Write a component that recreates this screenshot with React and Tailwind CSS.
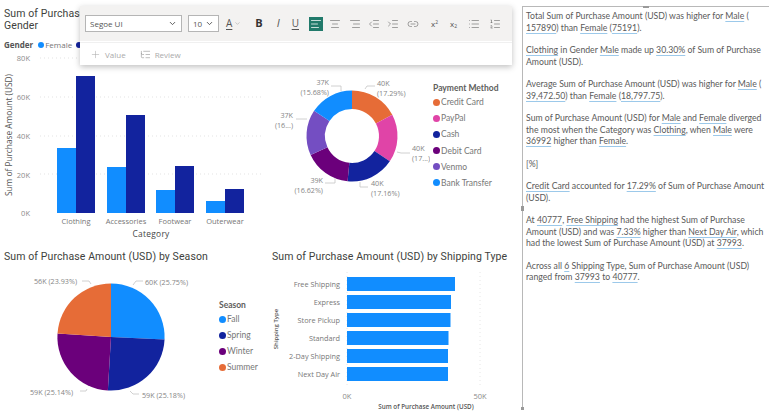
import { AlignCenter, AlignLeft, AlignRight, ChevronDown, IndentDecrease, IndentIncrease, Link2, List, ListOrdered, ListTree, Plus } from 'lucide-react';

const BLUE = '#118DFF';
const NAVY = '#12239E';
const ORANGE = '#E66C37';
const PINK = '#E044A7';
const PURPLE = '#6B007B';
const VIOLET = '#744EC2';

const slicePath = (cx, cy, r, inner, from, to) => {
  const pt = (rad, pct) => {
    const a = (pct / 100) * Math.PI * 2 - Math.PI / 2;
    return `${cx + rad * Math.cos(a)} ${cy + rad * Math.sin(a)}`;
  };
  const large = to - from > 50 ? 1 : 0;
  if (!inner) return `M${cx} ${cy}L${pt(r, from)}A${r} ${r} 0 ${large} 1 ${pt(r, to)}Z`;
  return `M${pt(r, from)}A${r} ${r} 0 ${large} 1 ${pt(r, to)}L${pt(inner, to)}A${inner} ${inner} 0 ${large} 0 ${pt(inner, from)}Z`;
};

const Slices = ({ cx, cy, r, inner = 0, data }) => {
  let at = 0;
  return data.map(([pct, color]) => {
    const d = slicePath(cx, cy, r, inner, at, at + pct);
    at += pct;
    return <path key={color} d={d} fill={color} />;
  });
};

const Legend = ({ title, items, gap }) => (
  <div className="text-[8.5px] leading-[12px] text-[#777] font-['Lato',sans-serif]">
    <p className="font-bold text-[#605e5c] whitespace-nowrap">{title}</p>
    <div className={`flex flex-col ${gap} mt-[2px]`}>
      {items.map(([name, color]) => (
        <div key={name} className="flex items-center gap-[1px] whitespace-nowrap">
          <span className="w-[7px] h-[7px] rounded-full" style={{ background: color }} />
          <span>{name}</span>
        </div>
      ))}
    </div>
  </div>
);

const Title = ({ children }) => (
  <h2 className="text-[10.5px] leading-[12px] tracking-[0.1px] text-[#403f3d] font-normal whitespace-nowrap">{children}</h2>
);

const CategoryChart = () => {
  const groups = [
    ['Clothing', 57, 149, 77],
    ['Accessories', 107, 168, 116],
    ['Footwear', 156, 191, 167],
    ['Outerwear', 206, 202, 190],
  ];
  return (
    <svg width="262" height="193" viewBox="0 52 262 193" className="block shrink-0" fontFamily="'Open Sans', sans-serif">
      {[59, 98, 137, 175].map((y) => (
        <line key={y} x1="40" x2="262" y1={y} y2={y} stroke="#e3e3e3" strokeDasharray="1 3" />
      ))}
      {[['80K', 62], ['60K', 101], ['40K', 140], ['20K', 179], ['0K', 217]].map(([t, y]) => (
        <text key={t} x="30" y={y} textAnchor="end" fontSize="7.5" fill="#8a8a8a">{t}</text>
      ))}
      {groups.map(([name, x, f, m]) => (
        <g key={name}>
          <rect x={x} y={f} width="19" height={214 - f} fill={BLUE} />
          <rect x={x + 19} y={m} width="19" height={214 - m} fill={NAVY} />
          <text x={x + 19} y="225" textAnchor="middle" fontSize="7.5" fill="#777">{name}</text>
        </g>
      ))}
      <text x="151" y="238" textAnchor="middle" fontSize="8.4" letterSpacing="0.3" fill="#444">Category</text>
      <text transform="translate(12 136) rotate(-90)" textAnchor="middle" fontSize="8.3" fill="#555">Sum of Purchase Amount (USD)</text>
    </svg>
  );
};

const DonutChart = () => {
  const labels = [
    [377, 85.5, '40K', '(17.29%)', 'start'],
    [412, 150.5, '40K', '(17...)', 'start'],
    [371, 185.5, '40K', '(17.16%)', 'start'],
    [323, 182.5, '39K', '(16.62%)', 'end'],
    [293, 117.5, '37K', '(16...)', 'end'],
    [329, 84.5, '37K', '(15.68%)', 'end'],
  ];
  const leaders = ['M365 89L367 86H375', 'M397 152L401 153H410', 'M360 182V187H368', 'M335 178V183H325', 'M296 119H307', 'M341 91V86H331'];
  return (
    <svg width="168" height="140" viewBox="262 70 168 140" className="block shrink-0" fontFamily="'Open Sans', sans-serif">
      <Slices cx={352} cy={136} r={45.5} inner={27} data={[[17.29, ORANGE], [17.1, PINK], [17.16, NAVY], [16.62, PURPLE], [16.15, VIOLET], [15.68, BLUE]]} />
      {leaders.map((d) => <path key={d} d={d} fill="none" stroke="#c4c4c4" strokeWidth="0.8" />)}
      {labels.map(([x, y, a, b, anchor]) => (
        <g key={b + x} fontSize="7.2" fill="#858585" textAnchor={anchor}>
          <text x={x} y={y}>{a}</text>
          <text x={x} y={y + 10}>{b}</text>
        </g>
      ))}
    </svg>
  );
};

const SeasonChart = () => (
  <svg width="215" height="130" viewBox="0 272 215 130" className="block shrink-0" fontFamily="'Open Sans', sans-serif">
    <Slices cx={111} cy={337} r={53.6} data={[[25.75, BLUE], [25.18, NAVY], [25.14, PURPLE], [23.93, ORANGE]]} />
    {['M133 285L136 281H143', 'M130 391L133 394H139', 'M80 391H86L87 389', 'M82 281H89L91 284'].map((d) => (
      <path key={d} d={d} fill="none" stroke="#c4c4c4" strokeWidth="0.8" />
    ))}
    <g fontSize="7.2" fill="#858585">
      <text x="145" y="284.5">60K (25.75%)</text>
      <text x="142" y="397.5">59K (25.18%)</text>
      <text x="30" y="394.5">59K (25.14%)</text>
      <text x="34" y="283.5">56K (23.93%)</text>
    </g>
  </svg>
);

const ShippingChart = () => {
  const rows = [
    ['Free Shipping', 277, 108],
    ['Express', 295, 104],
    ['Store Pickup', 313, 103.5],
    ['Standard', 331, 101.5],
    ['2-Day Shipping', 349, 101],
    ['Next Day Air', 367, 101],
  ];
  return (
    <svg width="250" height="143" viewBox="270 272 250 143" className="block shrink-0" fontFamily="'Open Sans', sans-serif">
      {[347, 480].map((x) => (
        <line key={x} x1={x} x2={x} y1="272" y2="385" stroke="#e6e6e6" strokeDasharray="1 3" />
      ))}
      {rows.map(([name, y, w]) => (
        <g key={name}>
          <rect x="347" y={y} width={w} height="14" fill={BLUE} />
          <text x="340" y={y + 10} textAnchor="end" fontSize="7.3" fill="#777">{name}</text>
        </g>
      ))}
      <text x="347" y="399" textAnchor="middle" fontSize="7.5" fill="#8a8a8a">0K</text>
      <text x="480" y="399" textAnchor="middle" fontSize="7.5" fill="#8a8a8a">50K</text>
      <text x="426" y="409" textAnchor="middle" fontSize="6.3" fontWeight="600" fill="#555">Sum of Purchase Amount (USD)</text>
      <text transform="translate(278 329) rotate(-90)" textAnchor="middle" fontSize="6" fontWeight="600" fill="#555">Shipping Type</text>
    </svg>
  );
};

const Hl = ({ children }) => (
  <span className="underline decoration-[#9cc9ea] underline-offset-2">{children}</span>
);

const ToolIcon = ({ icon: Icon, className }) => (
  <span className={`w-[14px] h-[14px] flex items-center justify-center ${className}`}>
    <Icon className="w-[12px] h-[12px] stroke-[1.2] text-[#666]" />
  </span>
);

const Toolbar = () => (
  <div className="absolute left-[80px] top-[6px] w-[432px] h-[59px] bg-white shadow-[0_2px_6px_rgba(0,0,0,0.25)] font-['Open_Sans',sans-serif]">
    <div className="h-[35px] bg-[#f3f2f1] flex items-center pl-[5px] text-[#555]">
      <div className="w-[97px] h-[17px] bg-white border border-[#b5b5b5] flex items-center justify-between px-[4px] text-[8px]">
        <span>Segoe UI</span>
        <ChevronDown className="w-[9px] h-[9px] stroke-[2.5]" />
      </div>
      <div className="ml-[6px] w-[31px] h-[17px] bg-white border border-[#b5b5b5] flex items-center justify-between px-[4px] text-[8px]">
        <span>10</span>
        <ChevronDown className="w-[9px] h-[9px] stroke-[2.5]" />
      </div>
      <span className="ml-[7px] text-[10px] underline underline-offset-2">A</span>
      <ChevronDown className="ml-[2px] w-[7px] h-[7px] text-[#aaa]" />
      <span className="ml-[14px] text-[11px] font-bold text-[#333]">B</span>
      <span className="ml-[14px] text-[11px] italic">I</span>
      <span className="ml-[12px] text-[10px] underline underline-offset-2">U</span>
      <span className="ml-[10px] w-[14px] h-[14px] bg-[#217a6b] flex items-center justify-center">
        <AlignLeft className="w-[12px] h-[12px] text-white stroke-[1.5]" />
      </span>
      <ToolIcon icon={AlignCenter} className="ml-[5px]" />
      <ToolIcon icon={AlignRight} className="ml-[6px]" />
      <ToolIcon icon={IndentDecrease} className="ml-[5px]" />
      <ToolIcon icon={IndentIncrease} className="ml-[5px]" />
      <ToolIcon icon={Link2} className="ml-[6px]" />
      <span className="ml-[11px] text-[8px]">x<sup className="text-[5px]">2</sup></span>
      <span className="ml-[12px] text-[8px]">x<sub className="text-[5px]">2</sub></span>
      <ToolIcon icon={List} className="ml-[10px]" />
      <ToolIcon icon={ListOrdered} className="ml-[7px]" />
    </div>
    <div className="h-[24px] border-t border-[#f0f0f0] mt-[1px] flex items-center pl-[10px] text-[8px] text-[#aaa]">
      <Plus className="w-[11px] h-[11px] stroke-[1.2]" />
      <span className="ml-[4px]">Value</span>
      <ListTree className="ml-[14px] w-[11px] h-[11px] stroke-[1.2] text-[#888]" />
      <span className="ml-[4px]">Review</span>
    </div>
  </div>
);

const App = () => {
  return (
    <div className="relative w-[769px] h-[418px] bg-white overflow-hidden flex font-['Roboto',sans-serif]">
      <div className="w-[522px] h-full grid grid-cols-[262px_260px] grid-rows-[245px_173px]">
        {/* Category / gender */}
        <div>
          <div className="pt-[8px] px-1">
            <Title>Sum of Purchase Amount (USD) by Category and<br />Gender</Title>
            <div className="mt-[7px] h-[12px] flex items-center text-[8px] text-[#777] font-['Open_Sans',sans-serif] whitespace-nowrap">
              <span className="font-bold text-[#555] mr-[5px]">Gender</span>
              <span className="w-[6px] h-[6px] rounded-full bg-[#118DFF] mr-[1px]" />
              <span className="mr-[4px]">Female</span>
              <span className="w-[6px] h-[6px] rounded-full bg-[#12239E] mr-[1px]" />
              <span>Male</span>
            </div>
          </div>
          <CategoryChart />
        </div>

        {/* Payment method */}
        <div className="pt-[70px] flex">
          <DonutChart />
          <div className="ml-[3px] pt-[12px]">
            <Legend
              title="Payment Method"
              gap="gap-[4.2px]"
              items={[['Credit Card', ORANGE], ['PayPal', PINK], ['Cash', NAVY], ['Debit Card', PURPLE], ['Venmo', VIOLET], ['Bank Transfer', BLUE]]}
            />
          </div>
        </div>

        {/* Season */}
        <div>
          <div className="pt-[6px] px-1 h-[27px]">
            <Title>Sum of Purchase Amount (USD) by Season</Title>
          </div>
          <div className="flex">
            <SeasonChart />
            <div className="ml-[4px] pt-[27px]">
              <Legend title="Season" gap="gap-[4px]" items={[['Fall', BLUE], ['Spring', NAVY], ['Winter', PURPLE], ['Summer', ORANGE]]} />
            </div>
          </div>
        </div>

        {/* Shipping */}
        <div className="pl-[8px]">
          <div className="pt-[6px] pl-[2px] h-[27px]">
            <Title>Sum of Purchase Amount (USD) by Shipping Type</Title>
          </div>
          <ShippingChart />
        </div>
      </div>

      {/* Smart narrative */}
      <div className="relative mt-[6px] h-[404px] flex-1 border-l border-t border-[#b8b8b8] pl-[3px] pt-[3px] font-['Lato',sans-serif] text-[8.7px] leading-[11.5px] text-[#5a5a5a] flex flex-col gap-[11px] whitespace-nowrap">
        <p>Total Sum of Purchase Amount (USD) was higher for <Hl>Male</Hl> (<br /><Hl>157890</Hl>) than <Hl>Female</Hl> (<Hl>75191</Hl>).</p>
        <p><Hl>Clothing</Hl> in Gender <Hl>Male</Hl> made up <Hl>30.30%</Hl> of Sum of Purchase<br />Amount (USD).</p>
        <p>Average Sum of Purchase Amount (USD) was higher for <Hl>Male</Hl> (<br /><Hl>39,472.50</Hl>) than <Hl>Female</Hl> (<Hl>18,797.75</Hl>).</p>
        <p>Sum of Purchase Amount (USD) for <Hl>Male</Hl> and <Hl>Female</Hl> diverged<br />the most when the Category was <Hl>Clothing</Hl>, when <Hl>Male</Hl> were<br /><Hl>36992</Hl> higher than <Hl>Female</Hl>.</p>
        <p>[%]</p>
        <p><Hl>Credit Card</Hl> accounted for <Hl>17.29%</Hl> of Sum of Purchase Amount<br />(USD).</p>
        <p>At <Hl>40777</Hl>, <Hl>Free Shipping</Hl> had the highest Sum of Purchase<br />Amount (USD) and was <Hl>7.33%</Hl> higher than <Hl>Next Day Air</Hl>, which<br />had the lowest Sum of Purchase Amount (USD) at <Hl>37993</Hl>.</p>
        <p>Across all <Hl>6</Hl> Shipping Type, Sum of Purchase Amount (USD)<br />ranged from <Hl>37993</Hl> to <Hl>40777</Hl>.</p>
        <span className="absolute -left-[2px] top-[199px] w-[3px] h-[5px] bg-[#999]" />
        <span className="absolute -left-[2px] bottom-0 w-[3px] h-[3px] bg-[#999]" />
        <span className="absolute left-[120px] -top-[1px] w-[6px] h-[2px] bg-[#999]" />
      </div>

      <Toolbar />
    </div>
  );
};

export default App;
